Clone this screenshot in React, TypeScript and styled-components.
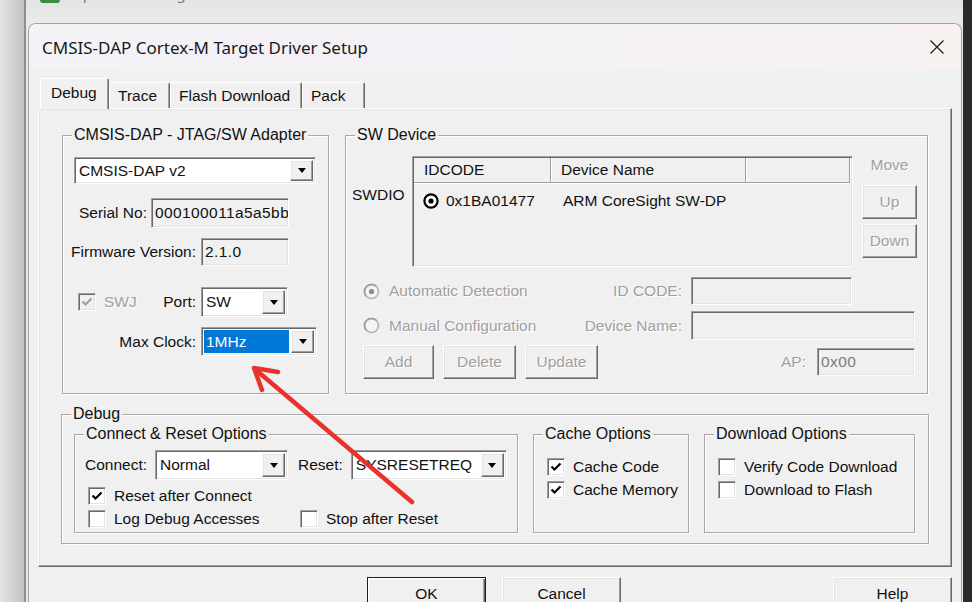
import React, { FC, ReactNode } from "react";
import styled, { createGlobalStyle, css } from "styled-components";

const GlobalStyle = createGlobalStyle`
  html, body {
    margin: 0;
    padding: 0;
    background: #f0f0f0;
  }
  body {
    width: 972px;
    height: 602px;
    overflow: hidden;
    font-family: "Liberation Sans", Arial, sans-serif;
    font-size: 15.5px;
    color: #111;
  }
  * {
    box-sizing: border-box;
  }
`;

/* classic win32 3D edges */
const sunken = css`
  border: 1px solid;
  border-color: #a0a0a0 #ffffff #ffffff #a0a0a0;
  box-shadow: inset 1px 1px 0 #696969, inset -1px -1px 0 #e3e3e3;
`;

const raised = css`
  border: 1px solid;
  border-color: #ffffff #696969 #696969 #ffffff;
  box-shadow: inset -1px -1px 0 #a0a0a0, inset 1px 1px 0 #e3e3e3;
  background: #f0f0f0;
`;

const disabledText = css`
  color: #a0a0a0;
  text-shadow: 1px 1px 0 #ffffff;
`;

const Screen = styled.div`
  position: relative;
  display: flex;
  width: 972px;
  height: 602px;
  overflow: hidden;
`;

const Desktop = styled.div`
  width: 24px;
  background: linear-gradient(to right, #e4e4e4, #c3c3c3);
`;

const DarkEdge = styled.div`
  width: 9px;
  background: #2b2b2b;
`;

const ParentWindow = styled.div`
  display: flex;
  flex-direction: column;
  width: 939px;
  border-left: 2px solid #8e8e8e;
  background: #e8e8e8;
`;

const ParentTitle = styled.div`
  flex-shrink: 0;
  height: 23px;
  display: flex;
  align-items: flex-start;
  gap: 11px;
  padding-left: 14px;
  overflow: hidden;
  background: linear-gradient(#e4e4e4, #ebebeb);
  color: #7a7a7a;
  font-family: "Noto Sans", sans-serif;
  font-size: 15px;
`;

const ParentIcon = styled.div`
  width: 20px;
  height: 20px;
  margin-top: -17px;
  border-radius: 3px;
  background: #3d8b3d;
`;

const ParentText = styled.div`
  line-height: 20px;
  margin-top: -17px;
`;

const Dialog = styled.div`
  flex: 1;
  min-height: 0;
  margin-left: 2px;
  width: 934px;
  display: flex;
  flex-direction: column;
  border: 1px solid #a3a3a3;
  border-bottom: none;
  border-radius: 8px 8px 0 0;
  background: #f0f0f0;
  overflow: hidden;
`;

const TitleBar = styled.div`
  flex-shrink: 0;
  height: 46px;
  display: flex;
  align-items: center;
  justify-content: space-between;
  padding: 0 17px 0 13px;
  background: linear-gradient(to right, #f2f2f7, #f4f1f6 50%, #f7f1f0);
  font-family: "Noto Sans", sans-serif;
  font-size: 17px;
  color: #1a1a1a;
`;

const CloseIcon = styled.svg`
  width: 14px;
  height: 14px;
`;

const Body = styled.div`
  flex-shrink: 0;
  display: flex;
  flex-direction: column;
  padding: 8px 9px 0 9px;
`;

const TabStrip = styled.div`
  position: relative;
  z-index: 2;
  height: 30px;
  display: flex;
  align-items: flex-end;
  padding-left: 2px;
`;

const Tab = styled.div<{ $active?: boolean; $w: number }>`
  width: ${({ $w }) => $w}px;
  height: ${({ $active }) => ($active ? 31 : 26)}px;
  margin-bottom: ${({ $active }) => ($active ? -1 : 0)}px;
  padding-left: ${({ $active }) => ($active ? 10 : 8)}px;
  padding-bottom: ${({ $active }) => ($active ? 3 : 0)}px;
  display: flex;
  align-items: center;
  border-top: 1px solid #ffffff;
  border-left: 1px solid #ffffff;
  border-right: 1px solid #696969;
  border-radius: 2px 2px 0 0;
  box-shadow: inset -1px 0 0 #a0a0a0;
  background: #f0f0f0;
`;

const TabPanel = styled.div`
  flex-shrink: 0;
  height: 459px;
  display: flex;
  flex-direction: column;
  border: 1px solid;
  border-color: #ffffff #696969 #696969 #ffffff;
  box-shadow: inset -1px -1px 0 #a0a0a0, inset 1px 1px 0 #e3e3e3;
`;

const TopRow = styled.div`
  flex-shrink: 0;
  display: flex;
  gap: 16px;
  height: 268px;
  margin: 17px 23px 0;
`;

const Group = styled.fieldset<{ $w?: number }>`
  margin: 0;
  padding: 0;
  min-width: 0;
  ${({ $w }) => ($w ? `width: ${$w}px; flex-shrink: 0;` : "flex: 1;")}
  display: flex;
  flex-direction: column;
  border: 1px solid #a7a7a7;
  box-shadow: inset 1px 1px 0 #ffffff, 1px 1px 0 #ffffff;
`;

const Caption = styled.legend`
  margin-left: 9px;
  padding: 0 2px;
  font-size: 16px;
  line-height: 18px;
  background: #f0f0f0;
`;

const Row = styled.div<{ $mt: number; $pl?: number; $pr?: number; $end?: boolean; $gap?: number }>`
  display: flex;
  align-items: center;
  margin-top: ${({ $mt }) => $mt}px;
  padding-left: ${({ $pl }) => $pl ?? 0}px;
  padding-right: ${({ $pr }) => $pr ?? 0}px;
  justify-content: ${({ $end }) => ($end ? "flex-end" : "flex-start")};
  gap: ${({ $gap }) => $gap ?? 5}px;
`;

const Label = styled.span<{ $ml?: number | "auto"; $off?: boolean }>`
  white-space: nowrap;
  margin-left: ${({ $ml }) => ($ml === "auto" ? "auto" : `${$ml ?? 0}px`)};
  ${({ $off }) => $off && disabledText}
`;

const Field = styled.div<{ $w: number; $h: number; $muted?: boolean }>`
  ${sunken};
  width: ${({ $w }) => $w}px;
  height: ${({ $h }) => $h}px;
  flex-shrink: 0;
  display: flex;
  align-items: center;
  padding-left: 3px;
  overflow: hidden;
  white-space: nowrap;
  letter-spacing: 0.4px;
  background: #f0f0f0;
  color: ${({ $muted }) => ($muted ? "#7c7c7c" : "#111")};
`;

const ComboBox = styled.div<{ $w: number; $h: number }>`
  ${sunken};
  width: ${({ $w }) => $w}px;
  height: ${({ $h }) => $h}px;
  flex-shrink: 0;
  display: flex;
  padding: 2px;
  background: #ffffff;
`;

const ComboValue = styled.div<{ $selected?: boolean }>`
  flex: 1;
  display: flex;
  align-items: center;
  padding-left: 2px;
  margin-right: 2px;
  overflow: hidden;
  white-space: nowrap;
  background: ${({ $selected }) => ($selected ? "#0078d7" : "transparent")};
  color: ${({ $selected }) => ($selected ? "#ffffff" : "#111")};
`;

const ComboButton = styled.div`
  ${raised};
  width: 23px;
  display: flex;
  align-items: center;
  justify-content: center;
  &::after {
    content: "";
    border-left: 4.5px solid transparent;
    border-right: 4.5px solid transparent;
    border-top: 5px solid #000;
  }
`;

const Combo: FC<{ w: number; h: number; value: string; selected?: boolean }> = ({ w, h, value, selected }) => (
  <ComboBox $w={w} $h={h}>
    <ComboValue $selected={selected}>{value}</ComboValue>
    <ComboButton />
  </ComboBox>
);

const Box = styled.span<{ $off?: boolean }>`
  ${sunken};
  width: 18px;
  height: 18px;
  flex-shrink: 0;
  display: inline-flex;
  align-items: center;
  justify-content: center;
  background: ${({ $off }) => ($off ? "#f0f0f0" : "#ffffff")};
`;

const CheckBox: FC<{ checked?: boolean; off?: boolean }> = ({ checked, off }) => (
  <Box $off={off}>
    {checked && (
      <svg width="12" height="12" viewBox="0 0 12 12">
        <path d="M1.5 5.5 L4.5 8.5 L10.5 2.5" fill="none" stroke={off ? "#a0a0a0" : "#000"} strokeWidth="2.2" />
      </svg>
    )}
  </Box>
);

const Option = styled.label<{ $w?: number }>`
  display: flex;
  align-items: center;
  gap: 8px;
  ${({ $w }) => $w && `width: ${$w}px;`}
  white-space: nowrap;
`;

const CheckRow = styled.div<{ $mt?: number }>`
  display: flex;
  align-items: center;
  height: 23px;
  margin-top: ${({ $mt }) => $mt ?? 0}px;
  padding-left: 13px;
`;

const Radio: FC<{ checked?: boolean; off?: boolean }> = ({ checked, off }) =>
  off ? (
    <svg width="17" height="17" viewBox="0 0 17 17">
      <circle cx="8.5" cy="8.5" r="7" fill="#f4f4f4" stroke="#b4b4b4" strokeWidth="1.6" />
      <path d="M3.5 13.5 A7 7 0 0 1 13.5 3.5" fill="none" stroke="#9c9c9c" strokeWidth="1.6" />
      {checked && <circle cx="8.5" cy="8.5" r="2.6" fill="#8c8c8c" />}
    </svg>
  ) : (
    <svg width="16" height="16" viewBox="0 0 16 16">
      <circle cx="8" cy="8" r="6.6" fill="#ffffff" stroke="#000" strokeWidth="2.2" />
      {checked && <circle cx="8" cy="8" r="2.6" fill="#000" />}
    </svg>
  );

const PushButton = styled.div<{ $w: number; $h?: number; $off?: boolean; $default?: boolean }>`
  ${raised};
  width: ${({ $w }) => $w}px;
  height: ${({ $h }) => $h ?? 34}px;
  flex-shrink: 0;
  display: flex;
  align-items: center;
  justify-content: center;
  ${({ $off }) => $off && disabledText}
  ${({ $default }) =>
    $default &&
    css`
      border-color: #1e1e1e;
      box-shadow: inset 1px 1px 0 #ffffff, inset -1px -1px 0 #696969, inset -2px -2px 0 #a0a0a0;
    `}
`;

/* SW device part */
const SwTop = styled.div`
  display: flex;
  align-items: flex-start;
  margin-top: 12px;
  padding-left: 6px;
`;

const SwLabel = styled.div`
  width: 60px;
  line-height: 20px;
  margin-top: 29px;
`;

const ListView = styled.div`
  ${sunken};
  width: 441px;
  height: 111px;
  display: flex;
  flex-direction: column;
  padding: 1px 2px 0 1px;
  background: #f0f0f0;
`;

const ListHeader = styled.div`
  display: flex;
  height: 25px;
  border-bottom: 1px solid #a0a0a0;
  box-shadow: 0 1px 0 #ffffff;
`;

const HeadCell = styled.div<{ $w?: number }>`
  ${({ $w }) => ($w ? `width: ${$w}px;` : "flex: 1;")}
  display: flex;
  align-items: center;
  padding-left: 10px;
  border-right: 1px solid #a0a0a0;
  box-shadow: 1px 0 0 #ffffff;
`;

const ListRow = styled.div`
  display: flex;
  height: 22px;
  margin-top: 7px;
`;

const ListCell = styled.div<{ $w?: number; $pl: number }>`
  ${({ $w }) => ($w ? `width: ${$w}px;` : "flex: 1;")}
  display: flex;
  align-items: center;
  gap: 7px;
  padding-left: ${({ $pl }) => $pl}px;
  white-space: nowrap;
`;

const MoveColumn = styled.div`
  width: 55px;
  margin-left: 9px;
  display: flex;
  flex-direction: column;
  gap: 5px;
`;

const MoveLabel = styled.div`
  ${disabledText};
  line-height: 18px;
  text-align: center;
  margin-bottom: 6px;
`;

const SwRow = styled.div<{ $mt: number; $h: number; $pr: number }>`
  display: flex;
  align-items: center;
  justify-content: space-between;
  height: ${({ $h }) => $h}px;
  margin-top: ${({ $mt }) => $mt}px;
  padding: 0 ${({ $pr }) => $pr}px 0 17px;
`;

const Cluster = styled.div<{ $gap: number }>`
  display: flex;
  align-items: center;
  gap: ${({ $gap }) => $gap}px;
`;

/* debug part */
const DebugGroup = styled(Group)`
  flex: none;
  height: 139px;
  margin: 11px 22px 0;
`;

const SubRow = styled.div`
  display: flex;
  gap: 15px;
  height: 108px;
  margin-top: 2px;
  padding: 0 13px 0 12px;
`;

const ButtonRow = styled.div`
  flex-shrink: 0;
  display: flex;
  gap: 16px;
  margin-top: 10px;
  padding-left: 329px;
`;

const HelpSlot = styled.div`
  margin-left: auto;
`;

const ArrowLayer = styled.svg`
  position: absolute;
  left: 0;
  top: 0;
  pointer-events: none;
`;

const GroupBox: FC<{ title: string; w?: number; children: ReactNode }> = ({ title, w, children }) => (
  <Group $w={w}>
    <Caption>{title}</Caption>
    {children}
  </Group>
);

export default function App() {
  return (
    <>
      <GlobalStyle />
      <Screen>
        <Desktop />
        <ParentWindow>
          <ParentTitle>
            <ParentIcon />
            <ParentText>Options for Target 'Test'</ParentText>
          </ParentTitle>
          <Dialog>
            <TitleBar>
              <span>CMSIS-DAP Cortex-M Target Driver Setup</span>
              <CloseIcon viewBox="0 0 14 14">
                <path d="M0.5 0.5 L13.5 13.5 M13.5 0.5 L0.5 13.5" stroke="#1a1a1a" strokeWidth="1.2" />
              </CloseIcon>
            </TitleBar>
            <Body>
              <TabStrip>
                <Tab $active $w={69}>Debug</Tab>
                <Tab $w={61}>Trace</Tab>
                <Tab $w={132}>Flash Download</Tab>
                <Tab $w={63}>Pack</Tab>
              </TabStrip>
              <TabPanel>
                <TopRow>
                  <GroupBox title="CMSIS-DAP - JTAG/SW Adapter" w={267}>
                    <Row $mt={13} $pl={11}>
                      <Combo w={242} h={27} value="CMSIS-DAP v2" />
                    </Row>
                    <Row $mt={14} $end $pr={39} $gap={4}>
                      <Label>Serial No:</Label>
                      <Field $w={138} $h={30}>000100011a5a5bb</Field>
                    </Row>
                    <Row $mt={10} $end $pr={39}>
                      <Label>Firmware Version:</Label>
                      <Field $w={88} $h={28}>2.1.0</Field>
                    </Row>
                    <Row $mt={21} $pl={15} $pr={40}>
                      <CheckBox checked off />
                      <Label $off $ml={3}>SWJ</Label>
                      <Label $ml="auto">Port:</Label>
                      <Combo w={87} h={30} value="SW" />
                    </Row>
                    <Row $mt={10} $end $pr={11}>
                      <Label>Max Clock:</Label>
                      <Combo w={116} h={29} value="1MHz" selected />
                    </Row>
                  </GroupBox>
                  <GroupBox title="SW Device">
                    <SwTop>
                      <SwLabel>SWDIO</SwLabel>
                      <ListView>
                        <ListHeader>
                          <HeadCell $w={137}>IDCODE</HeadCell>
                          <HeadCell $w={195}>Device Name</HeadCell>
                          <HeadCell />
                        </ListHeader>
                        <ListRow>
                          <ListCell $w={137} $pl={9}>
                            <Radio checked />
                            0x1BA01477
                          </ListCell>
                          <ListCell $pl={12}>ARM CoreSight SW-DP</ListCell>
                        </ListRow>
                      </ListView>
                      <MoveColumn>
                        <MoveLabel>Move</MoveLabel>
                        <PushButton $w={55} $off>Up</PushButton>
                        <PushButton $w={55} $off>Down</PushButton>
                      </MoveColumn>
                    </SwTop>
                    <SwRow $mt={10} $h={28} $pr={75}>
                      <Cluster $gap={9}>
                        <Radio checked off />
                        <Label $off>Automatic Detection</Label>
                      </Cluster>
                      <Cluster $gap={9}>
                        <Label $off>ID CODE:</Label>
                        <Field $w={161} $h={28} />
                      </Cluster>
                    </SwRow>
                    <SwRow $mt={6} $h={29} $pr={12}>
                      <Cluster $gap={9}>
                        <Radio off />
                        <Label $off>Manual Configuration</Label>
                      </Cluster>
                      <Cluster $gap={9}>
                        <Label $off>Device Name:</Label>
                        <Field $w={224} $h={29} />
                      </Cluster>
                    </SwRow>
                    <SwRow $mt={5} $h={34} $pr={12}>
                      <Cluster $gap={9}>
                        <PushButton $w={71} $off>Add</PushButton>
                        <PushButton $w={73} $off>Delete</PushButton>
                        <PushButton $w={73} $off>Update</PushButton>
                      </Cluster>
                      <Cluster $gap={11}>
                        <Label $off>AP:</Label>
                        <Field $w={98} $h={28} $muted>0x00</Field>
                      </Cluster>
                    </SwRow>
                  </GroupBox>
                </TopRow>
                <DebugGroup>
                  <Caption>Debug</Caption>
                  <SubRow>
                    <GroupBox title="Connect & Reset Options" w={444}>
                      <Row $mt={7} $pl={10} $gap={8}>
                        <Label>Connect:</Label>
                        <Combo w={133} h={30} value="Normal" />
                        <Label $ml={2}>Reset:</Label>
                        <Combo w={156} h={30} value="SYSRESETREQ" />
                      </Row>
                      <CheckRow $mt={4}>
                        <Option>
                          <CheckBox checked />
                          Reset after Connect
                        </Option>
                      </CheckRow>
                      <CheckRow>
                        <Option $w={212}>
                          <CheckBox />
                          Log Debug Accesses
                        </Option>
                        <Option>
                          <CheckBox />
                          Stop after Reset
                        </Option>
                      </CheckRow>
                    </GroupBox>
                    <GroupBox title="Cache Options" w={156}>
                      <CheckRow $mt={12}>
                        <Option>
                          <CheckBox checked />
                          Cache Code
                        </Option>
                      </CheckRow>
                      <CheckRow>
                        <Option>
                          <CheckBox checked />
                          Cache Memory
                        </Option>
                      </CheckRow>
                    </GroupBox>
                    <GroupBox title="Download Options" w={211}>
                      <CheckRow $mt={12}>
                        <Option>
                          <CheckBox />
                          Verify Code Download
                        </Option>
                      </CheckRow>
                      <CheckRow>
                        <Option>
                          <CheckBox />
                          Download to Flash
                        </Option>
                      </CheckRow>
                    </GroupBox>
                  </SubRow>
                </DebugGroup>
              </TabPanel>
              <ButtonRow>
                <PushButton $w={119} $default>OK</PushButton>
                <PushButton $w={119}>Cancel</PushButton>
                <HelpSlot>
                  <PushButton $w={119}>Help</PushButton>
                </HelpSlot>
              </ButtonRow>
            </Body>
          </Dialog>
        </ParentWindow>
        <DarkEdge />
        <ArrowLayer width="972" height="602" viewBox="0 0 972 602">
          <line x1="412" y1="502" x2="256" y2="370" stroke="#e8322a" strokeWidth="4.5" strokeLinecap="round" />
          <polyline
            points="262,390 254,368 278,372"
            fill="none"
            stroke="#e8322a"
            strokeWidth="4.5"
            strokeLinecap="round"
            strokeLinejoin="round"
          />
        </ArrowLayer>
      </Screen>
    </>
  );
}
